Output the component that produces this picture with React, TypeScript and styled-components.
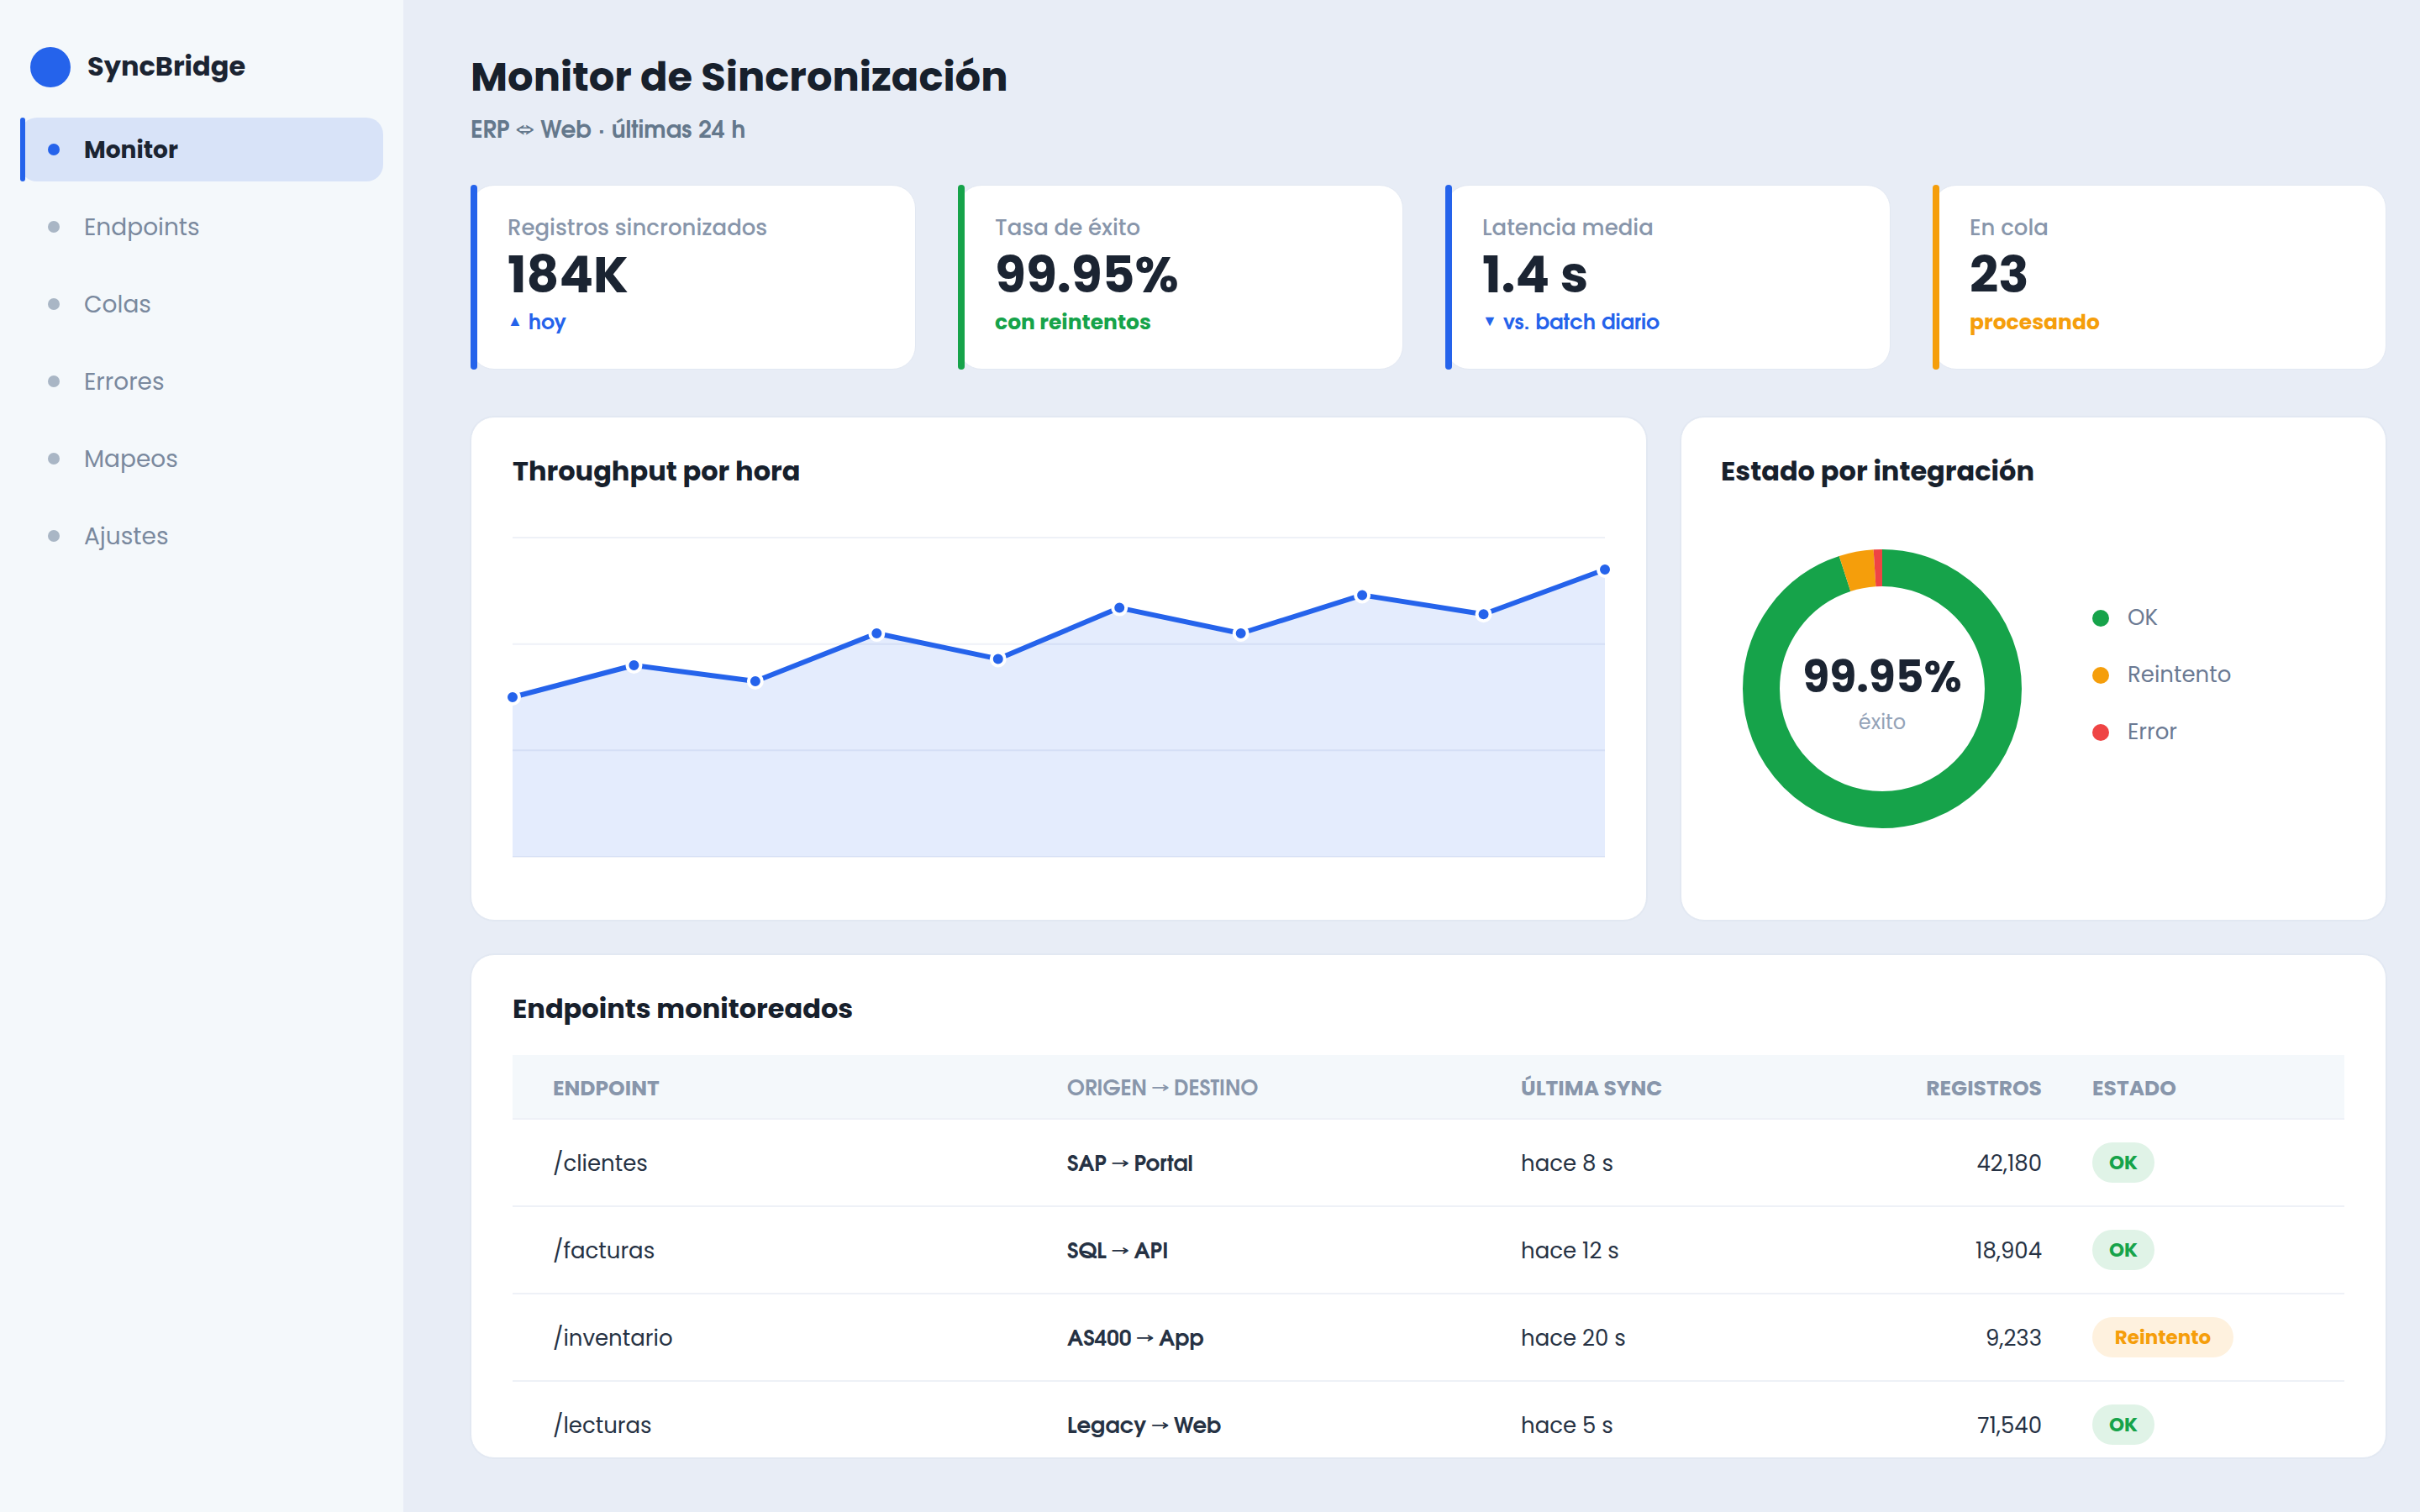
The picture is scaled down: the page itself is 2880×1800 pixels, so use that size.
import { createGlobalStyle, styled } from "styled-components";

const Colors = {
    page: "#e8edf6",
    sidebar: "#f4f8fb",
    white: "#ffffff",
    active: "#d8e3f8",
    blue: "#2563eb",
    green: "#16a34a",
    amber: "#f59e0b",
    red: "#ef4444",
    ink: "#17202c",
    text: "#1b2432",
    cell: "#263244",
    slate: "#64788c",
    muted: "#8896ab",
    nav: "#7a899e",
    legend: "#6b7a93",
    dot: "#a9b6c5",
    line: "#eef1f7",
    border: "#e2e8f2",
};

const NAV = ["Monitor", "Endpoints", "Colas", "Errores", "Mapeos", "Ajustes"];

const STATS = [
    { label: "Registros sincronizados", value: "184K", note: "hoy", mark: "▲", color: Colors.blue },
    { label: "Tasa de éxito", value: "99.95%", note: "con reintentos", mark: "", color: Colors.green },
    { label: "Latencia media", value: "1.4 s", note: "vs. batch diario", mark: "▼", color: Colors.blue },
    { label: "En cola", value: "23", note: "procesando", mark: "", color: Colors.amber },
];

const SERIES = [0.5, 0.6, 0.55, 0.7, 0.62, 0.78, 0.7, 0.82, 0.76, 0.9];

const SHARES = [
    { label: "OK", share: 95, color: Colors.green },
    { label: "Reintento", share: 4, color: Colors.amber },
    { label: "Error", share: 1, color: Colors.red },
];

const ROWS = [
    { path: "/clientes", from: "SAP", to: "Portal", sync: "hace 8 s", count: "42,180", ok: true },
    { path: "/facturas", from: "SQL", to: "API", sync: "hace 12 s", count: "18,904", ok: true },
    { path: "/inventario", from: "AS400", to: "App", sync: "hace 20 s", count: "9,233", ok: false },
    { path: "/lecturas", from: "Legacy", to: "Web", sync: "hace 5 s", count: "71,540", ok: true },
];

function ThroughputChart() {
    const width = 1300;
    const height = 380;
    const points = SERIES.map((v, i) => [
        (i * width) / (SERIES.length - 1),
        height * (1 - v),
    ]);
    const line = points.map((p) => p.join(",")).join(" ");

    return (
        <ChartSvg width={width} height={height}>
            {[0, 1, 2, 3].map((i) => (
                <line
                    key={i}
                    x1={0}
                    x2={width}
                    y1={(i * height) / 3}
                    y2={(i * height) / 3}
                    stroke={Colors.line}
                    strokeWidth={2}
                />
            ))}
            <polygon
                points={`0,${height} ${line} ${width},${height}`}
                fill={Colors.blue}
                fillOpacity={0.12}
            />
            <polyline
                points={line}
                fill="none"
                stroke={Colors.blue}
                strokeWidth={6}
                strokeLinejoin="round"
            />
            {points.map(([x, y]) => (
                <circle
                    key={x}
                    cx={x}
                    cy={y}
                    r={8}
                    fill={Colors.blue}
                    stroke={Colors.white}
                    strokeWidth={4}
                />
            ))}
        </ChartSvg>
    );
}

function Donut() {
    let offset = 0;
    return (
        <DonutBox>
            <svg width={332} height={332} viewBox="0 0 332 332">
                <g transform="rotate(-90 166 166)" fill="none" strokeWidth={44}>
                    {SHARES.map((s) => {
                        const start = offset;
                        offset += s.share;
                        return (
                            <circle
                                key={s.label}
                                cx={166}
                                cy={166}
                                r={144}
                                pathLength={100}
                                stroke={s.color}
                                strokeDasharray={`${s.share} ${100 - s.share}`}
                                strokeDashoffset={-start}
                            />
                        );
                    })}
                </g>
            </svg>
            <DonutLabel>
                <DonutValue>99.95%</DonutValue>
                <DonutCaption>éxito</DonutCaption>
            </DonutLabel>
        </DonutBox>
    );
}

export default function App() {
    return (
        <>
            <GlobalStyle />
            <Layout>
                <Sidebar>
                    <Brand>
                        <BrandMark />
                        <BrandName>SyncBridge</BrandName>
                    </Brand>
                    <Nav>
                        {NAV.map((name, i) => (
                            <NavItem key={name} $active={i === 0}>
                                <NavLabel>{name}</NavLabel>
                            </NavItem>
                        ))}
                    </Nav>
                </Sidebar>
                <Main>
                    <Title>Monitor de Sincronización</Title>
                    <Subtitle>
                        ERP <DoubleArrow>⇔</DoubleArrow> Web · últimas 24 h
                    </Subtitle>
                    <Stats>
                        {STATS.map((s) => (
                            <StatCard key={s.label} $color={s.color}>
                                <StatLabel>{s.label}</StatLabel>
                                <StatValue>{s.value}</StatValue>
                                {s.mark ? (
                                    <TrendNote $color={s.color}>
                                        <Mark>{s.mark}</Mark>
                                        {s.note}
                                    </TrendNote>
                                ) : (
                                    <StatNote $color={s.color}>{s.note}</StatNote>
                                )}
                            </StatCard>
                        ))}
                    </Stats>
                    <Charts>
                        <Panel>
                            <PanelTitle>Throughput por hora</PanelTitle>
                            <ThroughputChart />
                        </Panel>
                        <StatusPanel>
                            <PanelTitle>Estado por integración</PanelTitle>
                            <StatusBody>
                                <Donut />
                                <Legend>
                                    {SHARES.map((s) => (
                                        <LegendItem key={s.label} $color={s.color}>
                                            <LegendLabel>{s.label}</LegendLabel>
                                        </LegendItem>
                                    ))}
                                </Legend>
                            </StatusBody>
                        </StatusPanel>
                    </Charts>
                    <Panel>
                        <PanelTitle>Endpoints monitoreados</PanelTitle>
                        <HeadRow>
                            <HeadCell>ENDPOINT</HeadCell>
                            <HeadRoute>
                                ORIGEN <Arrow>→</Arrow> DESTINO
                            </HeadRoute>
                            <HeadCell>ÚLTIMA SYNC</HeadCell>
                            <HeadCell $right>REGISTROS</HeadCell>
                            <HeadCell>ESTADO</HeadCell>
                        </HeadRow>
                        {ROWS.map((r) => (
                            <Row key={r.path}>
                                <Cell>{r.path}</Cell>
                                <Route>
                                    {r.from} <Arrow>→</Arrow> {r.to}
                                </Route>
                                <Cell>{r.sync}</Cell>
                                <Count>{r.count}</Count>
                                <Badge $ok={r.ok}>{r.ok ? "OK" : "Reintento"}</Badge>
                            </Row>
                        ))}
                    </Panel>
                </Main>
            </Layout>
        </>
    );
}

// lines that carry a symbol are set in the geometric face
const symbolFont = `"TeX Gyre Adventor", "Century Gothic", Poppins, sans-serif`;

const GlobalStyle = createGlobalStyle`
    * {
        box-sizing: border-box;
    }
    body {
        margin: 0;
        background-color: ${Colors.page};
        font-family: Poppins, Inter, "Liberation Sans", sans-serif;
        color: ${Colors.text};
    }
`;
const Layout = styled.div`
    display: flex;
    width: 2880px;
    height: 1800px;
    overflow: hidden;
`;
const Sidebar = styled.aside`
    width: 480px;
    padding: 56px 24px;
    background-color: ${Colors.sidebar};
`;
const Brand = styled.div`
    display: flex;
    align-items: center;
    gap: 20px;
    height: 48px;
    padding-left: 12px;
`;
const BrandMark = styled.span`
    width: 48px;
    height: 48px;
    border-radius: 50%;
    background-color: ${Colors.blue};
`;
const BrandName = styled.span`
    padding-bottom: 2px;
    font-size: 32px;
    font-weight: 700;
`;
const Nav = styled.nav`
    display: flex;
    flex-direction: column;
    gap: 16px;
    margin-top: 36px;
`;
const NavItem = styled.a<{ $active: boolean }>`
    position: relative;
    display: flex;
    align-items: center;
    gap: 29px;
    height: 76px;
    padding-left: 33px;
    border-radius: 20px;
    font-size: 28px;
    font-weight: ${({ $active }) => ($active ? 700 : 400)};
    color: ${({ $active }) => ($active ? Colors.text : Colors.nav)};
    background-color: ${({ $active }) => ($active ? Colors.active : "transparent")};
    &::before {
        content: "";
        width: 14px;
        height: 14px;
        border-radius: 50%;
        background-color: ${({ $active }) => ($active ? Colors.blue : Colors.dot)};
    }
    &::after {
        content: "";
        display: ${({ $active }) => ($active ? "block" : "none")};
        position: absolute;
        left: 0;
        top: 0;
        width: 6px;
        height: 100%;
        border-radius: 3px;
        background-color: ${Colors.blue};
    }
`;
const NavLabel = styled.span`
    padding-top: 2px;
`;
const Main = styled.main`
    display: flex;
    flex-direction: column;
    width: 2400px;
    padding: 58px 40px 64px 80px;
`;
const Title = styled.h1`
    margin: 0;
    height: 68px;
    font-size: 48px;
    line-height: 67px;
    font-weight: 700;
    color: ${Colors.ink};
`;
const Subtitle = styled.div`
    height: 44px;
    margin: 8px 0 42px;
    font-family: ${symbolFont};
    font-size: 28px;
    line-height: 44px;
    font-weight: 600;
    color: ${Colors.slate};
`;
const Arrow = styled.span`
    display: inline-flex;
    justify-content: center;
    width: 18px;
    font-size: 24px;
    line-height: 20px;
    font-weight: 400;
    vertical-align: 3px;
`;
const DoubleArrow = styled(Arrow)`
    width: 21px;
    font-size: 22px;
    vertical-align: 4px;
`;
const Stats = styled.section`
    display: grid;
    grid-template-columns: 530px 530px 530px 1fr;
    gap: 50px;
    height: 220px;
    margin-bottom: 56px;
`;
const StatCard = styled.div<{ $color: string }>`
    position: relative;
    padding: 32px 43px 0;
    border: 1px solid ${Colors.border};
    border-radius: 28px;
    background-color: ${Colors.white};
    &::before {
        content: "";
        position: absolute;
        left: -1px;
        top: -1px;
        bottom: -1px;
        width: 8px;
        border-radius: 4px;
        background-color: ${({ $color }) => $color};
    }
`;
const StatLabel = styled.div`
    font-size: 26px;
    line-height: 36px;
    font-weight: 500;
    color: ${Colors.muted};
`;
const StatValue = styled.div`
    height: 75px;
    font-size: 60px;
    line-height: 76px;
    font-weight: 700;
`;
const StatNote = styled.div<{ $color: string }>`
    padding-top: 1px;
    font-size: 25px;
    line-height: 38px;
    font-weight: 700;
    color: ${({ $color }) => $color};
`;
const TrendNote = styled(StatNote)`
    display: flex;
    align-items: center;
    padding-top: 3px;
    font-family: ${symbolFont};
`;
const Mark = styled.span`
    width: 25px;
    padding-bottom: 9px;
    font-family: "Liberation Sans", sans-serif;
    font-size: 18px;
    line-height: 20px;
`;
const Charts = styled.section`
    display: grid;
    grid-template-columns: 1400px 840px;
    gap: 40px;
    height: 600px;
    margin-bottom: 40px;
`;
const Panel = styled.section`
    height: 600px;
    padding: 41px 49px 0;
    border: 1px solid ${Colors.border};
    border-radius: 28px;
    background-color: ${Colors.white};
    box-shadow: 0 0 0 1px ${Colors.border};
    overflow: hidden;
`;
const StatusPanel = styled(Panel)`
    padding: 41px 47px 0;
`;
const PanelTitle = styled.h2`
    margin: 0;
    height: 44px;
    font-size: 32px;
    line-height: 45px;
    font-weight: 700;
    color: ${Colors.ink};
`;
const ChartSvg = styled.svg`
    display: block;
    margin-top: 58px;
    overflow: visible;
`;
const StatusBody = styled.div`
    display: flex;
    align-items: center;
    gap: 84px;
    margin: 72px 0 0 26px;
`;
const DonutBox = styled.div`
    position: relative;
    width: 332px;
    height: 332px;
`;
const DonutLabel = styled.div`
    position: absolute;
    inset: 0;
    display: flex;
    flex-direction: column;
    align-items: center;
    padding-top: 120px;
`;
const DonutValue = styled.div`
    font-size: 52px;
    line-height: 64px;
    font-weight: 700;
`;
const DonutCaption = styled.div`
    margin-top: 5px;
    font-size: 24px;
    line-height: 34px;
    color: #94a3b8;
`;
const Legend = styled.div`
    display: flex;
    flex-direction: column;
    gap: 32px;
    margin-bottom: 32px;
`;
const LegendItem = styled.div<{ $color: string }>`
    display: flex;
    align-items: center;
    gap: 22px;
    height: 36px;
    font-size: 26px;
    line-height: 34px;
    color: ${Colors.legend};
    &::before {
        content: "";
        width: 20px;
        height: 20px;
        border-radius: 50%;
        background-color: ${({ $color }) => $color};
    }
`;
const LegendLabel = styled.span`
    padding-bottom: 2px;
`;
const Row = styled.div`
    display: grid;
    grid-template-columns: 612px 540px 430px 190px 1fr;
    align-items: center;
    width: 2180px;
    height: 104px;
    padding-left: 48px;
    border-bottom: 2px solid ${Colors.line};
`;
const HeadRow = styled(Row)`
    height: 77px;
    margin-top: 34px;
    background-color: ${Colors.sidebar};
`;
const HeadCell = styled.div<{ $right?: boolean }>`
    padding-top: 4px;
    font-size: 25px;
    line-height: 36px;
    font-weight: 700;
    color: ${Colors.muted};
    text-align: ${({ $right }) => ($right ? "right" : "left")};
    &:last-child {
        padding-left: 60px;
    }
`;
const HeadRoute = styled(HeadCell)`
    padding-top: 8px;
    font-family: ${symbolFont};
`;
const Cell = styled.div`
    padding-top: 2px;
    font-size: 26px;
    line-height: 38px;
    color: ${Colors.cell};
`;
const Route = styled(Cell)`
    padding-top: 5px;
    font-family: ${symbolFont};
    font-weight: 600;
`;
const Count = styled(Cell)`
    text-align: right;
`;
const Badge = styled.span<{ $ok: boolean }>`
    display: flex;
    align-items: center;
    justify-content: center;
    width: ${({ $ok }) => ($ok ? 74 : 168)}px;
    height: 48px;
    margin-left: 60px;
    padding-bottom: 1px;
    border-radius: 24px;
    font-size: 23px;
    font-weight: 700;
    color: ${({ $ok }) => ($ok ? Colors.green : Colors.amber)};
    background-color: ${({ $ok }) => ($ok ? "#e0f3e7" : "#fef1de")};
`;
